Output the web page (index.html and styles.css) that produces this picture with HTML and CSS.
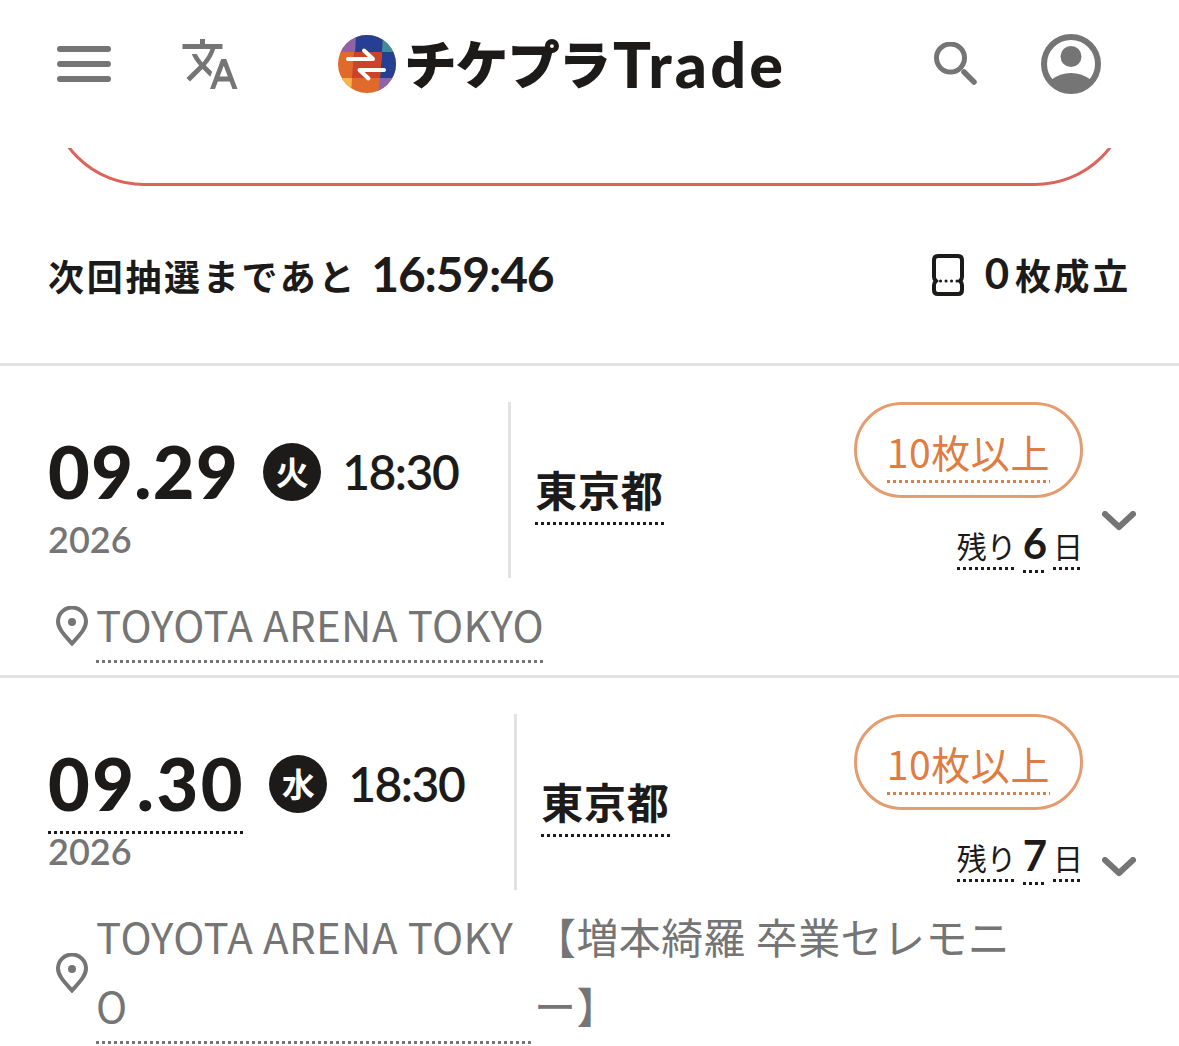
FILE: index.html
```html
<!DOCTYPE html>
<html lang="ja">
  <head>
    <meta charset="UTF-8" />
    <meta name="viewport" content="width=device-width, initial-scale=1.0" />
    <title>チケプラTrade</title>
    <link rel="stylesheet" href="styles.css" />
  </head>
  <body>
    <header class="header">
      <svg class="icon-menu" viewBox="0 0 54 36">
        <path d="M3 3h48M3 18h48M3 33h48" />
      </svg>
      <svg class="icon-translate" viewBox="0 0 24 24">
        <path d="M12.87 15.07l-2.54-2.51.03-.03c1.74-1.94 2.98-4.17 3.71-6.53H17V4h-7V2H8v2H1v1.99h11.17C11.5 7.92 10.44 9.75 9 11.35 8.07 10.32 7.3 9.19 6.69 8h-2c.73 1.63 1.73 3.17 2.98 4.56l-5.09 5.02L4 19l5-5 3.11 3.11.76-2.04zM18.5 10h-2L12 22h2l1.12-3h4.75L21 22h2l-4.5-12zm-2.62 7l1.62-4.33L19.12 17h-3.24z" />
      </svg>
      <div class="logo">
        <svg class="logo-mark" viewBox="0 0 58 58">
          <defs>
            <clipPath id="mark"><circle cx="29" cy="29" r="29" /></clipPath>
          </defs>
          <g clip-path="url(#mark)">
            <rect width="58" height="58" fill="#e06a2c" />
            <path d="M0 0h18l-1 17H0z" fill="#9063a8" />
            <path d="M18 0h27v17H17z" fill="#263f92" />
            <path d="M45 0h13v17H44z" fill="#3f8d9c" />
            <path d="M44 17h14v26H42z" fill="#263f92" />
            <path d="M16 17h28l-2 26H14z" fill="#cb4329" />
            <path d="M0 43h14l-1 15H0z" fill="#f5b64a" />
            <path d="M42 43h16v15H40z" fill="#9063a8" />
          </g>
          <path class="logo-arrow" d="M10 24h25l-9-8.500M46 35H21.500l9 8.500" />
        </svg>
        <span class="logo-ja">チケプラ</span>
        <span class="logo-en">Trade</span>
      </div>
      <svg class="icon-search" viewBox="0 0 44 44">
        <circle cx="16.5" cy="16" r="14" />
        <path class="handle" d="M30 30l10 10" />
      </svg>
      <svg class="icon-account" viewBox="0 0 60 60">
        <circle class="ring" cx="30" cy="30" r="27" />
        <circle cx="30" cy="22.5" r="10.5" />
        <path d="M10 46q9-7 20-7t20 7q-8 12-20 12t-20-12z" />
      </svg>
    </header>

    <div class="card-window">
      <div class="card"></div>
    </div>

    <section class="summary">
      <p class="countdown">次回抽選まであと<span class="timer">16:59:46</span></p>
      <p class="closed">
        <svg class="icon-ticket" viewBox="0 0 32 42">
          <path d="M6 2h20q4 0 4 4v17q0 2-2 4q2 2 2 4v5q0 4-4 4H6q-4 0-4-4v-5q0-2 2-4q-2-2-2-4V6q0-4 4-4z" />
          <path class="perforation" d="M8.500 27h17" />
        </svg>
        <span class="closed-num">0</span>枚成立
      </p>
    </section>

    <ul class="events">
      <li class="event">
        <div class="event-body">
          <div class="event-top">
            <div class="schedule">
              <div class="datetime">
                <span class="date">09.29</span>
                <span class="weekday">火</span>
                <span class="time">18:30</span>
              </div>
              <div class="year">2026</div>
            </div>
            <div class="prefecture"><span class="dotted">東京都</span></div>
            <div class="status">
              <div class="pill"><span class="dotted">10枚以上</span></div>
              <div class="remain">
                <span class="dotted">残り</span>
                <span class="dotted days">6</span>
                <span class="dotted">日</span>
              </div>
            </div>
          </div>
          <div class="venue">
            <svg class="icon-pin" viewBox="0 0 32 40">
              <path d="M16 37.500C9 29.500 2 23 2 15.500a14 14 0 0 1 28 0C30 23 23 29.500 16 37.500z" />
              <circle cx="16" cy="16" r="4" />
            </svg>
            <span class="venue-name dotted">TOYOTA ARENA TOKYO</span>
          </div>
        </div>
        <svg class="icon-chevron" viewBox="0 0 34 20">
          <path d="M3 3l14 13L31 3" />
        </svg>
      </li>
      <li class="event">
        <div class="event-body">
          <div class="event-top">
            <div class="schedule">
              <div class="datetime">
                <span class="date wide dotted">09.30</span>
                <span class="weekday">水</span>
                <span class="time">18:30</span>
              </div>
              <div class="year">2026</div>
            </div>
            <div class="prefecture"><span class="dotted">東京都</span></div>
            <div class="status">
              <div class="pill"><span class="dotted">10枚以上</span></div>
              <div class="remain">
                <span class="dotted">残り</span>
                <span class="dotted days">7</span>
                <span class="dotted">日</span>
              </div>
            </div>
          </div>
          <div class="venue">
            <svg class="icon-pin" viewBox="0 0 32 40">
              <path d="M16 37.500C9 29.500 2 23 2 15.500a14 14 0 0 1 28 0C30 23 23 29.500 16 37.500z" />
              <circle cx="16" cy="16" r="4" />
            </svg>
            <span class="venue-name dotted narrow">TOYOTA ARENA TOKYO</span>
            <span class="venue-note">【増本綺羅 卒業セレモニー】</span>
          </div>
        </div>
        <svg class="icon-chevron" viewBox="0 0 34 20">
          <path d="M3 3l14 13L31 3" />
        </svg>
      </li>
    </ul>
  </body>
</html>
```
FILE: styles.css
```css
* {
  box-sizing: border-box;
}

body {
  margin: 0;
  height: 1046px;
  overflow: hidden;
  background-color: #fff;
  color: #1d1b1a;
  font-family: "Noto Sans CJK JP", sans-serif;
}

p,
ul {
  margin: 0;
  padding: 0;
  list-style: none;
}

svg {
  display: block;
  flex: none;
}

/* header */
.header {
  display: flex;
  align-items: center;
  height: 148px;
  padding: 0 78px 20px 57px;
}

.icon-menu {
  width: 54px;
  height: 36px;
  stroke: #757575;
  stroke-width: 6;
  stroke-linecap: round;
}

.icon-translate {
  width: 60px;
  height: 60px;
  margin-left: 69px;
  fill: #757575;
}

.logo {
  display: flex;
  align-items: center;
  width: 450px;
  margin-left: 98px;
  white-space: nowrap;
}

.logo-mark {
  width: 58px;
  height: 58px;
}

.logo-arrow {
  fill: none;
  stroke: #fff;
  stroke-width: 4;
  stroke-linecap: round;
  stroke-linejoin: round;
}

.logo-ja {
  width: 205px;
  margin: -4px 0 0 9px;
  font-size: 51px;
  font-weight: 700;
  line-height: 60px;
  letter-spacing: 0.5px;
  -webkit-text-stroke: 2px #1d1b1a;
}

.logo-en {
  margin: -1px 0 0 3px;
  font-family: Lato, sans-serif;
  font-size: 63px;
  font-weight: 900;
  line-height: 60px;
  letter-spacing: 3.2px;
}

.icon-search {
  width: 44px;
  height: 44px;
  margin-left: 146px;
  fill: none;
  stroke: #757575;
  stroke-width: 5;
  stroke-linecap: round;
}

.icon-search .handle {
  stroke-width: 5.5;
}

.icon-account {
  width: 60px;
  height: 60px;
  margin-left: auto;
  fill: #757575;
}

.icon-account .ring {
  fill: none;
  stroke: #757575;
  stroke-width: 6;
}

/* bottom edge of the card scrolled under the header */
.card-window {
  display: flex;
  align-items: flex-end;
  height: 38px;
  padding: 0 48px;
  overflow: hidden;
}

.card {
  flex: 1;
  height: 240px;
  border: 3px solid #dc645c;
  border-radius: 96px;
}

.summary {
  display: flex;
  justify-content: space-between;
  height: 180px;
  padding: 59px 48px 0;
  border-bottom: 3px solid #e2e2e2;
  font-size: 36px;
  font-weight: 700;
  line-height: 60px;
  letter-spacing: 2.7px;
}

.countdown,
.closed {
  display: flex;
}

.closed {
  margin-top: -1px;
}

.timer {
  margin: -1px 0 0 14px;
  font-family: Lato, sans-serif;
  font-size: 48px;
  letter-spacing: -1.2px;
}

.icon-ticket {
  width: 32px;
  height: 42px;
  margin: 10px 21px 0 0;
  fill: none;
  stroke: #1d1b1a;
  stroke-width: 4;
}

.perforation {
  stroke-width: 3;
  stroke-linecap: round;
  stroke-dasharray: 0.1 5.4;
}

.closed-num {
  margin: -1px 3px 0 0;
  font-family: Lato, sans-serif;
  font-size: 42px;
}

/* event list */
.event {
  display: flex;
  align-items: center;
  padding: 0 43px 0 48px;
  border-bottom: 3px solid #e2e2e2;
}

.event-body {
  width: 1035px;
  padding: 36px 0 12px;
}

.event-top {
  display: flex;
  height: 176px;
}

.dotted {
  background-image: repeating-linear-gradient(90deg, currentColor 0 3px, transparent 3px 6px);
  background-position: 0 100%;
  background-repeat: no-repeat;
  background-size: 100% 3px;
}

.schedule {
  padding-right: 50px;
  border-right: 3px solid #e2e2e2;
  font-family: Lato, sans-serif;
}

.datetime {
  display: flex;
  align-items: center;
  height: 120px;
  padding-top: 20px;
}

.date {
  height: 100px;
  font-size: 72px;
  font-weight: 900;
  line-height: 99px;
  letter-spacing: 1.4px;
}

.date.wide {
  letter-spacing: 2.6px;
}

.weekday {
  width: 58px;
  height: 58px;
  margin: 0 21px 0 24px;
  border-radius: 50%;
  background-color: #1d1b1a;
  color: #fff;
  font-family: "Noto Sans CJK JP", sans-serif;
  font-size: 33px;
  font-weight: 700;
  line-height: 57px;
  text-align: center;
}

.time {
  margin-top: -2px;
  font-size: 48px;
  font-weight: 600;
  letter-spacing: -1.5px;
}

.year {
  color: #757575;
  font-size: 36px;
  font-weight: 600;
  line-height: 34px;
}

.prefecture {
  padding: 56px 0 0 24px;
  font-size: 42px;
  font-weight: 700;
  line-height: 61px;
  letter-spacing: 0.8px;
}

.prefecture .dotted {
  display: block;
  padding-bottom: 6px;
}

.status {
  display: flex;
  flex-direction: column;
  align-items: flex-end;
  margin-left: auto;
}

.pill {
  height: 96px;
  padding: 15px 30px 0;
  border: 3px solid #e59d70;
  border-radius: 48px;
  color: #df7c42;
  font-size: 39px;
  line-height: 63px;
  letter-spacing: 0.6px;
}

.pill .dotted {
  display: block;
}

.remain {
  display: flex;
  gap: 6px;
  align-items: flex-start;
  margin-top: 25px;
  font-size: 30px;
  line-height: 45px;
}

.remain .dotted {
  height: 47px;
}

.remain .days {
  height: 50px;
  font-family: Lato, sans-serif;
  font-size: 42px;
  font-weight: 700;
  line-height: 41px;
}

.venue {
  display: flex;
  align-items: center;
  margin-top: 11px;
  padding-left: 8px;
  color: #757575;
  font-size: 42px;
  line-height: 69px;
  letter-spacing: 0.4px;
}

.icon-pin {
  width: 32px;
  height: 40px;
  margin-right: 8px;
  fill: none;
  stroke: #757575;
  stroke-width: 4;
}

.icon-pin circle {
  fill: #757575;
  stroke: none;
}

.venue-name,
.venue-note {
  padding-bottom: 5px;
}

.narrow {
  width: 438px;
  word-break: break-all;
}

.venue-note {
  width: 490px;
  word-break: break-all;
}

.icon-chevron {
  width: 34px;
  height: 20px;
  margin-left: auto;
  fill: none;
  stroke: #757575;
  stroke-width: 6;
  stroke-linecap: round;
  stroke-linejoin: round;
}
```
